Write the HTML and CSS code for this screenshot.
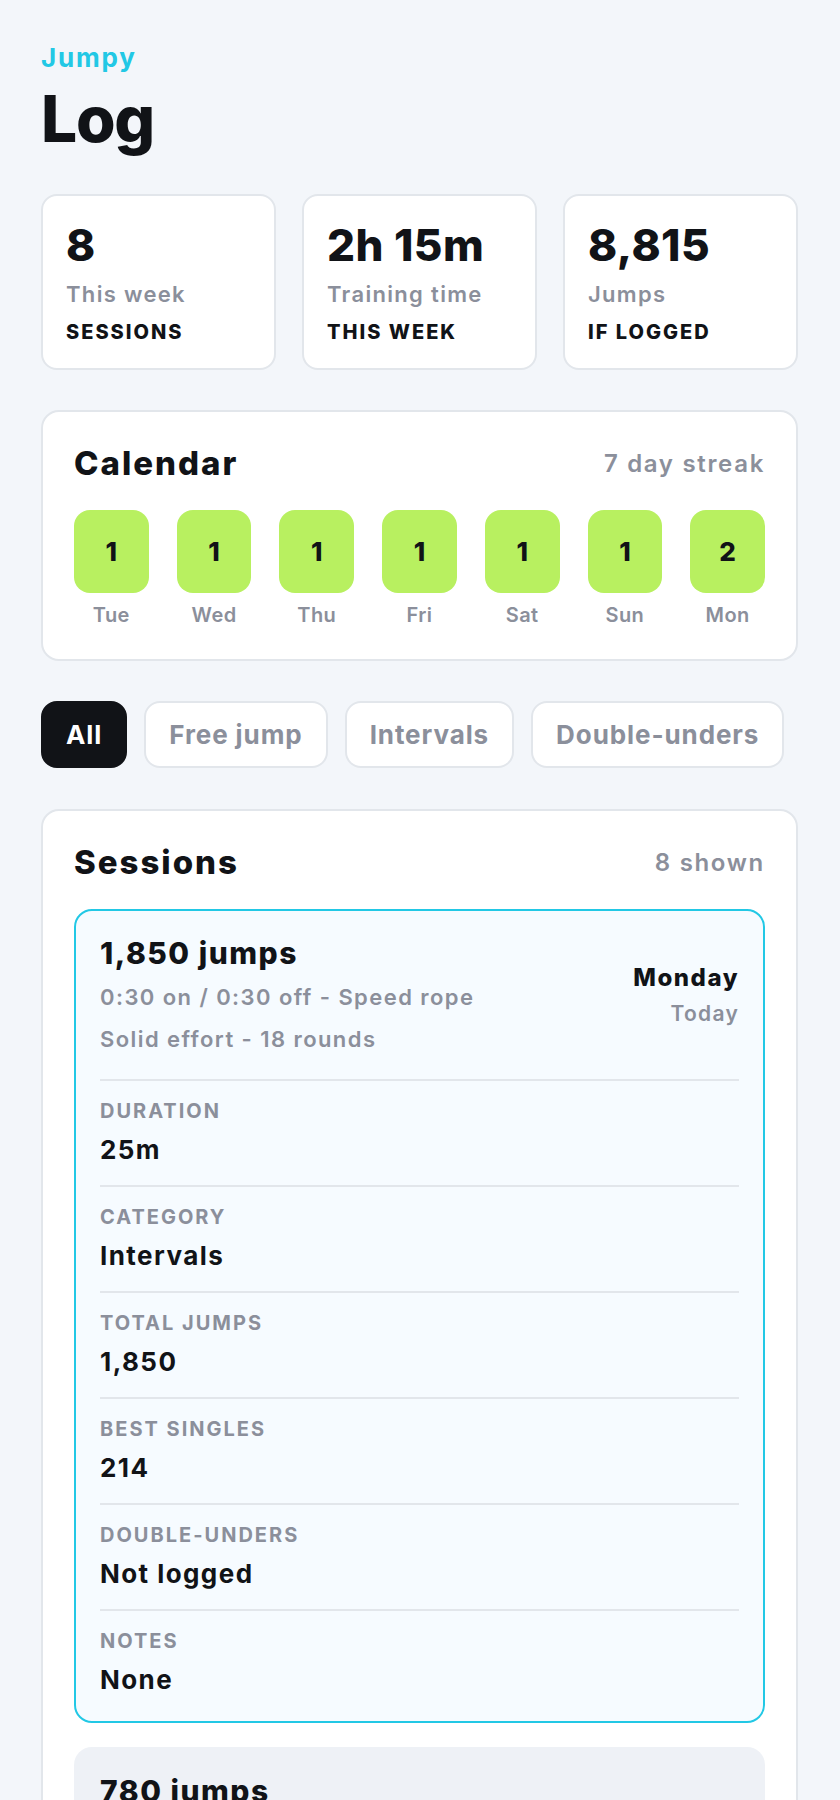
FILE: index.html
```html
<!DOCTYPE html>
<html lang="en">
<head>
  <meta charset="UTF-8" />
  <meta name="viewport" content="width=device-width, initial-scale=1.0" />
  <title>Jumpy – Log</title>
  <link rel="stylesheet" href="styles.css">
</head>
<body>
  <main class="page">
    <header class="top">
      <div class="brand">Jumpy</div>
      <h1>Log</h1>
    </header>

    <section class="stats">
      <div class="stat">
        <div class="stat-value">8</div>
        <div class="stat-label">This week</div>
        <div class="stat-sub">Sessions</div>
      </div>
      <div class="stat">
        <div class="stat-value">2h 15m</div>
        <div class="stat-label">Training time</div>
        <div class="stat-sub">This week</div>
      </div>
      <div class="stat">
        <div class="stat-value">8,815</div>
        <div class="stat-label">Jumps</div>
        <div class="stat-sub">If logged</div>
      </div>
    </section>

    <section class="card">
      <div class="card-head">
        <h2>Calendar</h2>
        <span class="muted">7 day streak</span>
      </div>
      <div class="days">
        <div class="day"><div class="tile">1</div><span>Tue</span></div>
        <div class="day"><div class="tile">1</div><span>Wed</span></div>
        <div class="day"><div class="tile">1</div><span>Thu</span></div>
        <div class="day"><div class="tile">1</div><span>Fri</span></div>
        <div class="day"><div class="tile">1</div><span>Sat</span></div>
        <div class="day"><div class="tile">1</div><span>Sun</span></div>
        <div class="day"><div class="tile">2</div><span>Mon</span></div>
      </div>
    </section>

    <nav class="filters">
      <button class="chip active">All</button>
      <button class="chip">Free jump</button>
      <button class="chip">Intervals</button>
      <button class="chip">Double-unders</button>
    </nav>

    <section class="card">
      <div class="card-head">
        <h2>Sessions</h2>
        <span class="muted">8 shown</span>
      </div>

      <div class="session open">
        <div class="session-head">
          <div>
            <div class="session-title">1,850 jumps</div>
            <div class="session-sub">0:30 on / 0:30 off - Speed rope</div>
            <div class="session-sub">Solid effort - 18 rounds</div>
          </div>
          <div class="session-date">
            <div class="day-name">Monday</div>
            <div class="day-rel">Today</div>
          </div>
        </div>
        <div class="field"><div class="field-label">Duration</div><div class="field-value">25m</div></div>
        <div class="field"><div class="field-label">Category</div><div class="field-value">Intervals</div></div>
        <div class="field"><div class="field-label">Total jumps</div><div class="field-value">1,850</div></div>
        <div class="field"><div class="field-label">Best singles</div><div class="field-value">214</div></div>
        <div class="field"><div class="field-label">Double-unders</div><div class="field-value">Not logged</div></div>
        <div class="field"><div class="field-label">Notes</div><div class="field-value">None</div></div>
      </div>

      <div class="session">
        <div class="session-head">
          <div>
            <div class="session-title">780 jumps</div>
            <div class="session-sub">Free jump - Beaded rope</div>
            <div class="session-sub">Easy pace</div>
          </div>
          <div class="session-date">
            <div class="day-name">Monday</div>
            <div class="day-rel">Today</div>
          </div>
        </div>
      </div>
    </section>
  </main>
</body>
</html>
```

FILE: styles.css
```css
:root {
  --bg: #f3f6fa;
  --card: #ffffff;
  --line: #e2e6eb;
  --ink: #111317;
  --muted: #8b8f9b;
  --cyan: #22c8e5;
  --green: #b8f060;
}
* {
  box-sizing: border-box;
  font-family: "Inter", sans-serif;
}
body {
  margin: 0;
  background: var(--bg);
  color: var(--ink);
}
.page {
  padding: 42px 42px 40px 41px;
  display: flex;
  flex-direction: column;
  gap: 40px;
}
.brand {
  color: var(--cyan);
  font-size: 26px;
  line-height: 32px;
  font-weight: 700;
  letter-spacing: 0.07em;
}
h1 {
  margin: 10px 0 0;
  font-size: 64px;
  line-height: 70px;
  font-weight: 800;
  letter-spacing: -0.02em;
}
.stats {
  display: grid;
  grid-template-columns: repeat(3, 1fr);
  gap: 26px;
}
.stat {
  background: var(--card);
  border: 2px solid var(--line);
  border-radius: 16px;
  padding: 23px;
}
.stat-value {
  font-size: 44px;
  line-height: 52px;
  font-weight: 800;
  letter-spacing: 0.01em;
}
.stat-label {
  margin-top: 8px;
  font-size: 22px;
  line-height: 30px;
  font-weight: 600;
  color: var(--muted);
  letter-spacing: 0.06em;
}
.stat-sub {
  margin-top: 10px;
  font-size: 20px;
  line-height: 26px;
  font-weight: 800;
  text-transform: uppercase;
  letter-spacing: 0.1em;
}
.card {
  background: var(--card);
  border: 2px solid var(--line);
  border-radius: 18px;
  padding: 31px;
}
.card-head {
  display: flex;
  justify-content: space-between;
  align-items: center;
  margin-bottom: 27px;
}
h2 {
  margin: 0;
  font-size: 33px;
  line-height: 40px;
  font-weight: 800;
  letter-spacing: 0.06em;
}
.muted {
  color: var(--muted);
  font-size: 24px;
  font-weight: 600;
  letter-spacing: 0.07em;
}
.days {
  display: grid;
  grid-template-columns: repeat(7, 1fr);
  gap: 28px;
}
.day {
  display: flex;
  flex-direction: column;
  align-items: center;
  gap: 9px;
}
.day span {
  font-size: 20px;
  line-height: 26px;
  font-weight: 600;
  color: var(--muted);
  letter-spacing: 0.02em;
}
.tile {
  width: 100%;
  height: 83px;
  border-radius: 16px;
  background: var(--green);
  display: flex;
  align-items: center;
  justify-content: center;
  font-size: 26px;
  font-weight: 800;
}
.filters {
  display: flex;
  gap: 17px;
  margin-bottom: 1px;
}
.chip {
  flex: none;
  white-space: nowrap;
  height: 67px;
  padding: 0 23px;
  border: 2px solid var(--line);
  border-radius: 16px;
  background: var(--card);
  color: var(--muted);
  font-size: 26px;
  font-weight: 700;
  letter-spacing: 0.035em;
  cursor: pointer;
}
.chip.active {
  background: var(--ink);
  border-color: var(--ink);
  color: #fff;
}
.session {
  border: 2px solid transparent;
  border-radius: 18px;
  background: #eef1f6;
  padding: 24px;
  margin-bottom: 24px;
}
.session.open {
  border-color: var(--cyan);
  background: #f6fbff;
}
.session-head {
  display: flex;
  justify-content: space-between;
  align-items: center;
}
.session-title {
  font-size: 30px;
  line-height: 36px;
  font-weight: 800;
  letter-spacing: 0.05em;
}
.session-sub {
  margin-top: 10px;
  font-size: 22px;
  line-height: 32px;
  font-weight: 600;
  color: var(--muted);
  letter-spacing: 0.065em;
}
.session-date {
  text-align: right;
}
.day-name {
  font-size: 24px;
  line-height: 32px;
  font-weight: 800;
  letter-spacing: 0.064em;
}
.day-rel {
  margin-top: 6px;
  font-size: 21px;
  line-height: 28px;
  font-weight: 600;
  color: var(--muted);
  letter-spacing: 0.06em;
}
.field {
  border-top: 2px solid var(--line);
  margin-top: 18px;
  padding-top: 16px;
}
.session-head + .field {
  margin-top: 24px;
}
.field-label {
  font-size: 20px;
  line-height: 28px;
  font-weight: 700;
  color: var(--muted);
  text-transform: uppercase;
  letter-spacing: 0.1em;
}
.field-value {
  margin-top: 8px;
  font-size: 26px;
  line-height: 34px;
  font-weight: 700;
  letter-spacing: 0.055em;
}
```
